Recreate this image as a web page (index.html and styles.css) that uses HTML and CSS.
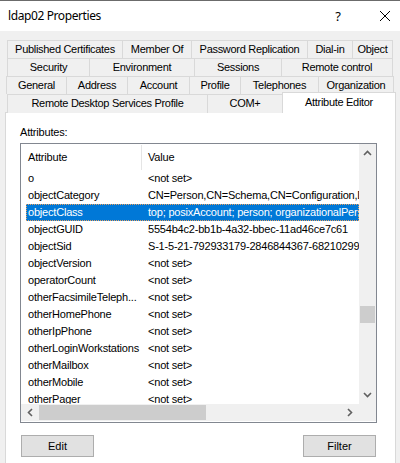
FILE: index.html
```html
<!DOCTYPE html>
<html>
<head>
<meta charset="utf-8">
<link rel="stylesheet" href="styles.css">
</head>
<body>
<div class="window">
  <div class="titlebar">
    <span class="title">ldap02 Properties</span>
    <span class="help">?</span>
    <svg class="close" width="12" height="12" viewBox="0 0 12 12"><path d="M1 1 L11 11 M11 1 L1 11" stroke="#000" stroke-width="1" fill="none"/></svg>
  </div>
  <div class="tabs">
    <div class="tabrow r1">
      <div class="tab">Published Certificates</div>
      <div class="tab">Member Of</div>
      <div class="tab">Password Replication</div>
      <div class="tab">Dial-in</div>
      <div class="tab">Object</div>
    </div>
    <div class="tabrow r2">
      <div class="tab">Security</div>
      <div class="tab">Environment</div>
      <div class="tab">Sessions</div>
      <div class="tab">Remote control</div>
    </div>
    <div class="tabrow r3">
      <div class="tab">General</div>
      <div class="tab">Address</div>
      <div class="tab">Account</div>
      <div class="tab">Profile</div>
      <div class="tab">Telephones</div>
      <div class="tab">Organization</div>
    </div>
    <div class="tabrow r4">
      <div class="tab">Remote Desktop Services Profile</div>
      <div class="tab">COM+</div>
      <div class="tab selected">Attribute Editor</div>
    </div>
  </div>
  <div class="panel">
    <div class="label">Attributes:</div>
    <div class="listview">
      <div class="content">
        <div class="header">
          <div class="hcol first">Attribute</div>
          <div class="hcol">Value</div>
        </div>
        <div class="row"><span>o</span><span>&lt;not set&gt;</span></div>
        <div class="row"><span>objectCategory</span><span>CN=Person,CN=Schema,CN=Configuration,DC=example,DC=local</span></div>
        <div class="row sel"><span>objectClass</span><span>top; posixAccount; person; organizationalPerson; user</span></div>
        <div class="row"><span>objectGUID</span><span>5554b4c2-bb1b-4a32-bbec-11ad46ce7c61</span></div>
        <div class="row"><span>objectSid</span><span>S-1-5-21-792933179-2846844367-682102997-1104</span></div>
        <div class="row"><span>objectVersion</span><span>&lt;not set&gt;</span></div>
        <div class="row"><span>operatorCount</span><span>&lt;not set&gt;</span></div>
        <div class="row"><span>otherFacsimileTeleph...</span><span>&lt;not set&gt;</span></div>
        <div class="row"><span>otherHomePhone</span><span>&lt;not set&gt;</span></div>
        <div class="row"><span>otherIpPhone</span><span>&lt;not set&gt;</span></div>
        <div class="row"><span>otherLoginWorkstations</span><span>&lt;not set&gt;</span></div>
        <div class="row"><span>otherMailbox</span><span>&lt;not set&gt;</span></div>
        <div class="row"><span>otherMobile</span><span>&lt;not set&gt;</span></div>
        <div class="row"><span>otherPager</span><span>&lt;not set&gt;</span></div>
      </div>
      <div class="vscroll">
        <svg class="arrow" width="9" height="6" viewBox="0 0 9 6"><path d="M1 5 L4.5 1.5 L8 5" stroke="#606060" stroke-width="1.6" fill="none"/></svg>
        <div class="vtrack"><div class="vthumb"></div></div>
        <svg class="arrow" width="9" height="6" viewBox="0 0 9 6"><path d="M1 1 L4.5 4.5 L8 1" stroke="#606060" stroke-width="1.6" fill="none"/></svg>
      </div>
      <div class="hscroll">
        <svg class="arrow" width="6" height="9" viewBox="0 0 6 9"><path d="M5 1 L1.5 4.5 L5 8" stroke="#606060" stroke-width="1.6" fill="none"/></svg>
        <div class="htrack"><div class="hthumb"></div></div>
        <svg class="arrow" width="6" height="9" viewBox="0 0 6 9"><path d="M1 1 L4.5 4.5 L1 8" stroke="#606060" stroke-width="1.6" fill="none"/></svg>
      </div>
      <div class="corner"></div>
    </div>
    <div class="buttons">
      <div class="btn">Edit</div>
      <div class="btn">Filter</div>
    </div>
  </div>
</div>
</body>
</html>
```
FILE: styles.css
```css
* { box-sizing: border-box; }
html, body { margin: 0; padding: 0; }
body {
  width: 400px;
  height: 463px;
  overflow: hidden;
  background: #f0f0f0;
  font-family: "Liberation Sans", Arial, sans-serif;
  font-size: 11px;
  color: #000;
}
.window { width: 400px; height: 463px; }
.titlebar {
  height: 31px;
  background: #fff;
  border-top: 1px solid #6b6b6b;
  display: flex;
  align-items: center;
  padding-left: 8px;
}
.title {
  font-family: "Noto Sans", "Open Sans", sans-serif;
  font-size: 12px;
  letter-spacing: -0.4px;
  flex: 1;
  margin-top: -1px;
}
.help {
  font-family: "Noto Sans", sans-serif;
  font-size: 13px;
  margin-right: 38px;
  margin-top: -1px;
}
.close { margin-right: 9px; margin-top: -1px; }

.tabs { padding-top: 9px; }
.tabrow {
  display: grid;
  height: 18px;
  margin-left: 7px;
}
.r1 { grid-template-columns: 116px 69px 116px 45px 40px; }
.r2 { grid-template-columns: 83px 105px 87px 111px; }
.r3 { grid-template-columns: 61px 61px 62px 51px 78px 75px; margin-left: 6px; }
.r4 { grid-template-columns: 201px 75px 113px; }
.tab {
  border-top: 1px solid #d9d9d9;
  border-right: 1px solid #d9d9d9;
  background: #f0f0f0;
  text-align: center;
  line-height: 16px;
  white-space: nowrap;
  letter-spacing: -0.3px;
}
.tab:first-child { border-left: 1px solid #d9d9d9; }
.tab.selected {
  position: relative;
  background: #fff;
  height: 21px;
  margin-top: -2px;
  border-left: 1px solid #d9d9d9;
  margin-left: -1px;
  line-height: 18px;
}

.panel {
  margin-left: 5px;
  width: 391px;
  height: 360px;
  background: #fff;
  border: 1px solid #d9d9d9;
  padding-left: 14px;
}
.label {
  margin-top: 13px;
  line-height: 13px;
  letter-spacing: -0.2px;
}
.listview {
  margin-top: 4px;
  width: 357px;
  height: 280px;
  border: 1px solid #828790;
  display: grid;
  grid-template-columns: 338px 17px;
  grid-template-rows: 260px 17px;
}
.content {
  overflow: hidden;
  background: #fff;
}
.header {
  height: 26px;
  display: grid;
  grid-template-columns: 121px 1fr;
}
.hcol {
  line-height: 26px;
  padding-left: 6px;
  letter-spacing: -0.2px;
}
.hcol.first {
  padding-left: 7px;
  border-right: 1px solid #e5e5e5;
  margin-top: 1px;
  line-height: 25px;
}
.row {
  height: 17px;
  line-height: 17px;
  margin-left: 5px;
  display: grid;
  grid-template-columns: 116px 1fr;
  white-space: nowrap;
  letter-spacing: -0.2px;
}
.row span { padding-left: 2px; overflow: hidden; }
.row span + span { padding-left: 6px; }
.row.sel {
  background: #0078d7;
  color: #fff;
  outline: 1px dotted #e8a060;
  outline-offset: -1px;
}
.vscroll {
  background: #f0f0f0;
  display: flex;
  flex-direction: column;
  align-items: center;
}
.vscroll .arrow { margin: 6px 0; }
.vtrack { flex: 1; width: 100%; display: flex; flex-direction: column; }
.vthumb {
  margin-top: 144px;
  margin-left: 1px;
  width: 15px;
  height: 17px;
  background: #cdcdcd;
}
.hscroll {
  background: #f0f0f0;
  display: flex;
  align-items: center;
}
.hscroll .arrow { margin: 0 6px; }
.htrack { flex: 1; height: 100%; display: flex; align-items: center; }
.hthumb {
  width: 167px;
  height: 15px;
  background: #cdcdcd;
}
.corner { background: #f0f0f0; }

.buttons {
  margin-top: 12px;
  margin-left: 1px;
  width: 355px;
  display: flex;
  justify-content: space-between;
}
.btn {
  width: 73px;
  height: 22px;
  background: #e1e1e1;
  border: 1px solid #adadad;
  text-align: center;
  line-height: 20px;
}
```
